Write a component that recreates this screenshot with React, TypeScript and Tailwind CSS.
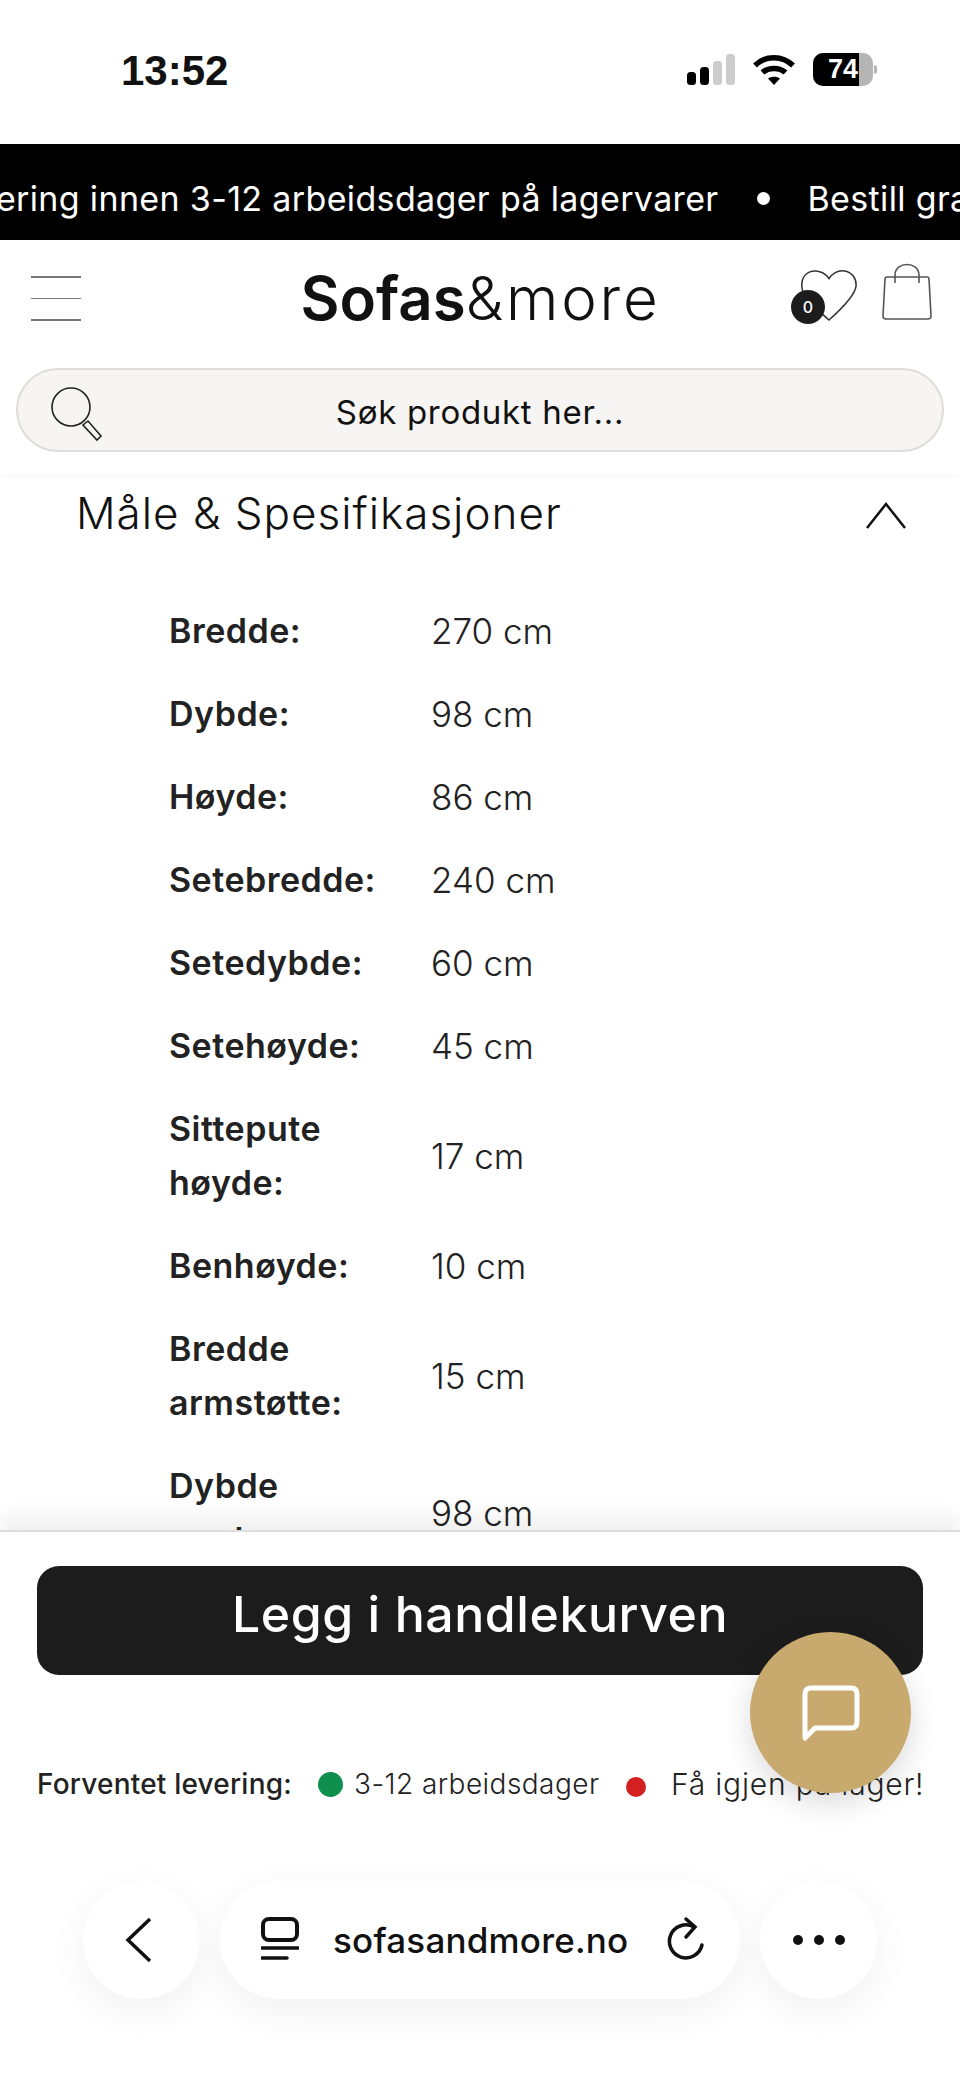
import React from 'react'

const specs = [
  { label: 'Bredde:', value: '270 cm' },
  { label: 'Dybde:', value: '98 cm' },
  { label: 'Høyde:', value: '86 cm' },
  { label: 'Setebredde:', value: '240 cm' },
  { label: 'Setedybde:', value: '60 cm' },
  { label: 'Setehøyde:', value: '45 cm' },
  { label: 'Sittepute høyde:', value: '17 cm' },
  { label: 'Benhøyde:', value: '10 cm' },
  { label: 'Bredde armstøtte:', value: '15 cm' },
  { label: 'Dybde armlene:', value: '98 cm' },
]

//Status bar
const StatusBar = () => (
  <div className="h-[144px] flex items-start justify-between pt-[50px] pl-[121px] pr-[83px]">
    <span className="text-[42px] leading-[42px] font-bold text-[#111] font-['Liberation_Sans',sans-serif]">13:52</span>
    <div className="flex items-center gap-[18px] mt-[3px]">
      <svg width="48" height="31" viewBox="0 0 48 31">
        <rect x="0" y="18" width="9" height="13" rx="3.5" fill="#000" />
        <rect x="13" y="13" width="9" height="18" rx="3.5" fill="#000" />
        <rect x="26" y="7" width="9" height="24" rx="3.5" fill="#ccc" />
        <rect x="39" y="0" width="9" height="31" rx="3.5" fill="#ccc" />
      </svg>
      <svg width="42" height="31" viewBox="0 0 42 31">
        <path d="M2 11.5C12.5 1 29.5 1 40 11.5" fill="none" stroke="#000" strokeWidth="5.5" />
        <path d="M9.5 18.5C15.5 13 26.5 13 32.5 18.5" fill="none" stroke="#000" strokeWidth="5.5" />
        <path d="M15 24.5C18 22 24 22 27 24.5L21 31Z" fill="#000" />
      </svg>
      <div className="flex items-center">
        <div className="relative w-[60px] h-[33px] rounded-[10px] bg-[#b5b5b5] overflow-hidden">
          <div className="w-[46px] h-full bg-black flex items-center justify-end pr-[1px]">
            <span className="text-[27px] leading-none font-bold text-white font-['Liberation_Sans',sans-serif]">74</span>
          </div>
        </div>
        <div className="w-[3px] h-[9px] ml-[1px] rounded-r-full bg-[#b5b5b5]" />
      </div>
    </div>
  </div>
)

//Ticker
const Ticker = () => (
  <div className="h-[96px] bg-black overflow-hidden flex items-center pt-[13px]">
    <div className="flex items-center whitespace-nowrap text-white text-[34px] tracking-[0.35px] -ml-[62px]">
      <span>Levering innen 3-12 arbeidsdager på lagervarer</span>
      <span className="w-[13px] h-[13px] rounded-full bg-white mx-[38px]" />
      <span>Bestill gratis prøver</span>
    </div>
  </div>
)

//Header
const Header = () => (
  <div className="relative z-10 h-[234px] bg-white shadow-[0_2px_10px_rgba(0,0,0,0.04)] px-[16px]">
    <div className="relative h-[128px] flex items-center justify-center">
      <div className="absolute left-[15px] top-[36px] w-[50px] flex flex-col gap-[20px]">
        <div className="h-[1.5px] bg-[#777]" />
        <div className="h-[1.5px] bg-[#777]" />
        <div className="h-[2px] bg-[#777]" />
      </div>
      <div className="text-[60px] leading-none text-[#111] -mt-[12px] ml-[1px]">
        <span className="font-semibold">Sofas</span>
        <span className="font-light tracking-[2.8px]">&amp;more</span>
      </div>
      <div className="absolute left-[772px] top-[22px] w-[70px] h-[70px]">
        <svg width="58" height="52" viewBox="0 0 60 54" className="absolute left-[12px] top-[7px]">
          <path d="M30 10C25 2 16 1 10 3C3 6 1 13 2 20C3 30 20 44 30 53C40 44 57 27 58 18C59 9 53 3 46 2C39 1 33 5 30 10Z" fill="none" stroke="#333" strokeWidth="1.6" />
        </svg>
        <div className="absolute left-[3px] top-[28px] w-[34px] h-[34px] rounded-full bg-[#1c1c1c] flex items-center justify-center text-white text-[16px] font-medium">0</div>
      </div>
      <svg width="50" height="58" viewBox="0 0 50 58" className="absolute left-[866px] top-[23px]">
        <path d="M5 14H45Q47 14 47 16L49 53Q49 56 46 56H4Q1 56 1 53L3 16Q3 14 5 14Z" fill="none" stroke="#555" strokeWidth="1.6" />
        <path d="M13 20V12C13 -2 37 -2 37 12V20" fill="none" stroke="#555" strokeWidth="1.6" />
      </svg>
    </div>
    <div className="relative h-[84px] rounded-full bg-[#f7f5f3] border-2 border-[#e0dcd8] flex items-center justify-center">
      <svg width="54" height="56" viewBox="0 0 54 56" className="absolute left-[32px] top-[17px]">
        <circle cx="21" cy="20" r="19" fill="none" stroke="#222" strokeWidth="1.6" />
        <path d="M33 38L38 34L51 49L47 53Z" fill="none" stroke="#222" strokeWidth="1.6" />
      </svg>
      <span className="text-[33px] tracking-[0.7px] text-[#111] mt-[5px]">Søk produkt her...</span>
    </div>
  </div>
)

//Specs
const Specs = () => (
  <div className="flex-1 overflow-hidden">
    <div className="flex items-center justify-between pl-[76px] pr-[54px] h-[78px]">
      <span className="text-[44px] tracking-[1px] font-light text-[#111]">Måle &amp; Spesifikasjoner</span>
      <svg width="40" height="28" viewBox="0 0 40 28" className="mt-[6px]">
        <path d="M1 26L20 2L39 26" fill="none" stroke="#111" strokeWidth="2.5" />
      </svg>
    </div>
    <table className="ml-[169px] mt-[37px] border-collapse text-[#222]">
      <tbody>
        {specs.map((s) => (
          <tr key={s.label}>
            <td className="w-[262px] pr-[32px] py-[14.5px] text-[34px] tracking-[0.5px] leading-[54px] font-semibold">{s.label}</td>
            <td className="py-[14.5px] text-[35px] leading-[54px] font-light">{s.value}</td>
          </tr>
        ))}
      </tbody>
    </table>
  </div>
)

//Bottom panel
const BottomPanel = () => (
  <div className="relative z-10 h-[551px] bg-white border-t-2 border-[#ddd] shadow-[0_-12px_24px_rgba(0,0,0,0.07)] pt-[34px]">
    <button className="block mx-[37px] w-[886px] h-[109px] pb-[12px] rounded-[22px] bg-[#1c1c1c] text-white text-[50px] tracking-[0.55px] font-medium">Legg i handlekurven</button>
    <div className="flex items-center mt-[89px] ml-[37px] h-[40px] text-[28px] text-[#222] whitespace-nowrap">
      <span className="font-medium tracking-[0.2px] w-[280px]">Forventet levering:</span>
      <span className="w-[25px] h-[25px] rounded-full bg-[#0f8f4d] ml-[1px]" />
      <span className="font-light tracking-[0.45px] ml-[11px] w-[272px]">3-12 arbeidsdager</span>
      <span className="w-[20px] h-[20px] rounded-full bg-[#d32020] mt-[5px]" />
      <span className="text-[30px] tracking-[0.8px] font-light ml-[25px]">Få igjen på lager!</span>
    </div>
    <div className="flex items-center gap-[20px] mt-[77px] ml-[83px]">
      <div className="w-[117px] h-[118px] rounded-full bg-white shadow-[0_12px_40px_rgba(0,0,0,0.06)] flex items-center justify-center">
        <svg width="28" height="46" viewBox="0 0 28 46" className="-ml-[6px]">
          <path d="M25 2L3 23L25 44" fill="none" stroke="#111" strokeWidth="3.5" />
        </svg>
      </div>
      <div className="w-[520px] h-[118px] rounded-full bg-white shadow-[0_12px_40px_rgba(0,0,0,0.06)] flex items-center pl-[41px]">
        <svg width="38" height="46" viewBox="0 0 38 46">
          <rect x="2" y="2" width="34" height="21" rx="6" fill="none" stroke="#111" strokeWidth="4" />
          <path d="M1 31H37" stroke="#111" strokeWidth="3.5" strokeLinecap="round" />
          <path d="M1 41H26" stroke="#111" strokeWidth="3.5" strokeLinecap="round" />
        </svg>
        <span className="ml-[34px] text-[35px] tracking-[0.2px] font-medium text-[#111]">sofasandmore.no</span>
        <svg width="42" height="50" viewBox="0 0 42 50" className="ml-[37px]">
          <path d="M37 30A16.5 16.5 0 1 1 29 12" fill="none" stroke="#111" strokeWidth="3.5" strokeLinecap="round" />
          <path d="M21 4L30 12L21 22" fill="none" stroke="#111" strokeWidth="3.5" strokeLinecap="round" />
        </svg>
      </div>
      <div className="w-[117px] h-[118px] rounded-full bg-white shadow-[0_12px_40px_rgba(0,0,0,0.06)] flex items-center justify-center gap-[11px]">
        <span className="w-[10px] h-[10px] rounded-full bg-[#111]" />
        <span className="w-[10px] h-[10px] rounded-full bg-[#111]" />
        <span className="w-[10px] h-[10px] rounded-full bg-[#111]" />
      </div>
    </div>
    <div className="absolute left-[750px] top-[100px] w-[161px] h-[161px] rounded-full bg-[#c8a96e] shadow-[0_10px_30px_rgba(0,0,0,0.15)] flex items-center justify-center">
      <svg width="58" height="58" viewBox="0 0 58 58" className="mt-[2px]">
        <path d="M3 53V9Q3 3 9 3H49Q55 3 55 9V37Q55 43 49 43H13Z" fill="none" stroke="#fff" strokeWidth="5" strokeLinejoin="round" />
      </svg>
    </div>
  </div>
)

const App: React.FC = () => {
  return (
    <div className="w-[960px] h-[2081px] overflow-hidden bg-white flex flex-col font-['Inter',sans-serif]">
      <StatusBar />
      <Ticker />
      <Header />
      <Specs />
      <BottomPanel />
    </div>
  )
}

export default App
